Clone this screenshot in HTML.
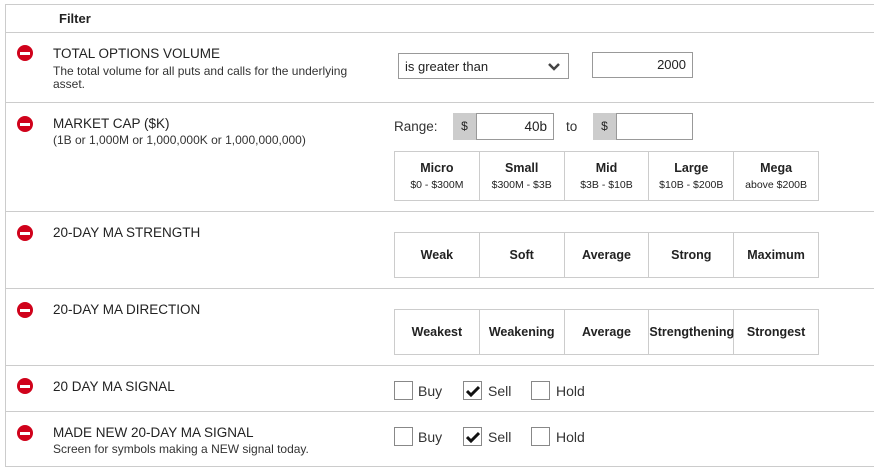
<!DOCTYPE html><html><head><style>
body{margin:0;width:874px;height:468px;background:#fff;font-family:"Liberation Sans",sans-serif;color:#222;position:relative;overflow:hidden}
.a{position:absolute}
.h{height:1px;background:#ccc;left:5px;width:869px}
.ic{width:16px;height:16px;border-radius:50%;background:#d0021b;left:17px}
.ic:after{content:"";position:absolute;left:3px;top:7px;width:10px;height:3px;background:#fff}
.t{left:53px;font-size:13.5px;color:#222}
.d{left:53px;font-size:12px;color:#333;line-height:13px}
.box{border:1px solid #999;box-sizing:border-box;background:#fff}
table{border-collapse:collapse;position:absolute;left:394px;width:425px;table-layout:fixed}
td{border:1px solid #ccc;text-align:center;font-weight:bold;font-size:12.5px;padding:0;white-space:nowrap;overflow:visible;color:#222}
td small{display:block;font-weight:normal;font-size:10.5px;margin-top:4px}
.cb{width:19px;height:19px;border:1px solid #888;box-sizing:border-box}
.cl{font-size:14px;color:#333}
</style></head><body>
<div class="a" style="left:5px;top:4px;width:1px;height:462px;background:#ccc"></div>
<div class="a h" style="top:4px"></div>
<div class="a" style="left:59px;top:11px;font-weight:bold;font-size:13px">Filter</div>
<div class="a h" style="top:32px"></div>

<div class="a ic" style="top:45px"></div>
<div class="a t" style="top:46px">TOTAL OPTIONS VOLUME</div>
<div class="a d" style="top:65px">The total volume for all puts and calls for the underlying<br>asset.</div>
<div class="a box" style="left:398px;top:53px;width:171px;height:26px;font-size:13px;padding:5px 6px">is greater than</div>
<svg class="a" style="left:548px;top:62px" width="12" height="9"><path d="M1 2 L6 7 L11 2" stroke="#444" stroke-width="2.5" fill="none"/></svg>
<div class="a box" style="left:592px;top:52px;width:101px;height:26px;font-size:13px;text-align:right;padding:4px 6px">2000</div>
<div class="a h" style="top:102px"></div>

<div class="a ic" style="top:116px"></div>
<div class="a t" style="top:116px">MARKET CAP ($K)</div>
<div class="a d" style="top:134px">(1B or 1,000M or 1,000,000K or 1,000,000,000)</div>
<div class="a" style="left:394px;top:119px;font-size:13.5px;color:#333">Range:</div>
<div class="a" style="left:453px;top:113px;width:23px;height:27px;background:#ccc;font-size:12px;text-align:center;line-height:27px">$</div>
<div class="a box" style="left:476px;top:113px;width:78px;height:27px;font-size:13.5px;text-align:right;padding:5px 6px">40b</div>
<div class="a" style="left:566px;top:119px;font-size:13.5px;color:#333">to</div>
<div class="a" style="left:593px;top:113px;width:23px;height:27px;background:#ccc;font-size:12px;text-align:center;line-height:27px">$</div>
<div class="a box" style="left:616px;top:113px;width:77px;height:27px"></div>
<table style="top:151px;height:50px"><tr><td>Micro<small>$0 - $300M</small></td><td>Small<small>$300M - $3B</small></td><td>Mid<small>$3B - $10B</small></td><td>Large<small>$10B - $200B</small></td><td>Mega<small>above $200B</small></td></tr></table>
<div class="a h" style="top:211px"></div>

<div class="a ic" style="top:225px"></div>
<div class="a t" style="top:225px">20-DAY MA STRENGTH</div>
<table style="top:232px;height:46px"><tr><td>Weak</td><td>Soft</td><td>Average</td><td>Strong</td><td>Maximum</td></tr></table>
<div class="a h" style="top:288px"></div>

<div class="a ic" style="top:302px"></div>
<div class="a t" style="top:302px">20-DAY MA DIRECTION</div>
<table style="top:309px;height:46px"><tr><td>Weakest</td><td>Weakening</td><td>Average</td><td>Strengthening</td><td>Strongest</td></tr></table>
<div class="a h" style="top:365px"></div>

<div class="a ic" style="top:378px"></div>
<div class="a t" style="top:379px">20 DAY MA SIGNAL</div>
<div class="a cb" style="left:394px;top:381px"></div><div class="a cl" style="left:418px;top:383px">Buy</div>
<div class="a cb" style="left:463px;top:381px"></div>
<svg class="a" style="left:466px;top:385px" width="14" height="12"><path d="M1 6 L5 10 L13 2" stroke="#111" stroke-width="3" fill="none"/></svg>
<div class="a cl" style="left:488px;top:383px">Sell</div>
<div class="a cb" style="left:531px;top:381px"></div><div class="a cl" style="left:556px;top:383px">Hold</div>
<div class="a h" style="top:411px"></div>

<div class="a ic" style="top:425px"></div>
<div class="a t" style="top:425px">MADE NEW 20-DAY MA SIGNAL</div>
<div class="a d" style="top:443px">Screen for symbols making a NEW signal today.</div>
<div class="a cb" style="left:394px;top:427px"></div><div class="a cl" style="left:418px;top:429px">Buy</div>
<div class="a cb" style="left:463px;top:427px"></div>
<svg class="a" style="left:466px;top:431px" width="14" height="12"><path d="M1 6 L5 10 L13 2" stroke="#111" stroke-width="3" fill="none"/></svg>
<div class="a cl" style="left:488px;top:429px">Sell</div>
<div class="a cb" style="left:531px;top:427px"></div><div class="a cl" style="left:556px;top:429px">Hold</div>
<div class="a h" style="top:466px"></div>
</body></html>
